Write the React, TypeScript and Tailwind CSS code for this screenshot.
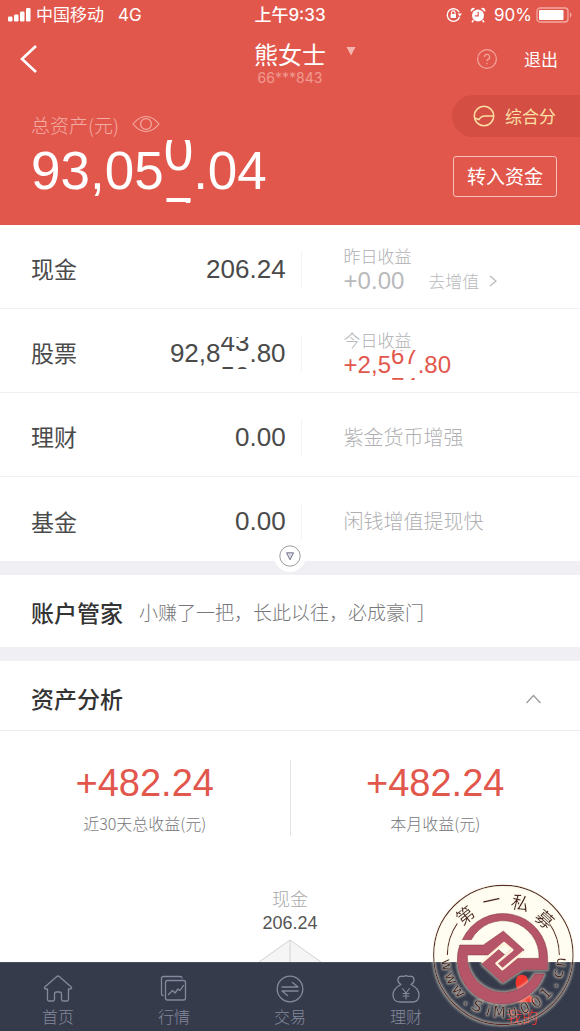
import type { ReactNode } from "react";

const NUM = "font-['Liberation_Sans','Noto_Sans_CJK_SC',sans-serif]";

type Digit = { shown: string; next: string };

type Amount = { head: string; rolling?: Digit[]; tail?: string };

function RollingAmount({
  amount,
  windowClass = "",
  stripClass = "",
}: {
  amount: Amount;
  windowClass?: string;
  stripClass?: string;
}) {
  return (
    <span className={`${NUM} flex items-center`}>
      <span>{amount.head}</span>
      {amount.rolling && (
        <span className={`flex overflow-hidden ${windowClass}`}>
          {amount.rolling.map((d, i) => (
            <span key={i} className={`flex flex-col gap-px ${stripClass}`}>
              <span>{d.shown}</span>
              <span>{d.next}</span>
            </span>
          ))}
        </span>
      )}
      {amount.tail && <span>{amount.tail}</span>}
    </span>
  );
}

function StatusBar() {
  return (
    <div className="grid h-[30px] grid-cols-3 items-center pl-2 pr-2 font-['Inter','Noto_Sans_CJK_SC',sans-serif] text-[17px] leading-none">
      <div className="flex items-center gap-1">
        <svg width="24" height="14" viewBox="0 0 24 14" fill="currentColor" aria-hidden="true">
          <rect x="0" y="8.5" width="4.5" height="5" rx="1.2" />
          <rect x="6" y="6.5" width="4.5" height="7" rx="1.2" />
          <rect x="12" y="3.5" width="4.5" height="10" rx="1.2" />
          <rect x="18" y="0" width="4.5" height="13.5" rx="1.2" />
        </svg>
        <span className="whitespace-nowrap">中国移动</span>
        <span className="ml-[10px]">4G</span>
      </div>
      <div className="whitespace-nowrap text-center font-medium">上午9:33</div>
      <div className="flex items-center justify-end">
        <svg width="16" height="16" viewBox="0 0 16 16" fill="none" aria-hidden="true">
          <path d="M13.2 5.2A6.3 6.3 0 1 0 13.6 9.8" stroke="currentColor" strokeWidth="1.4" />
          <path d="M11.6 6.4h4.4l-2.2 3z" fill="currentColor" />
          <rect x="4.6" y="7" width="5.4" height="4" rx=".6" fill="currentColor" />
          <path d="M5.6 7V5.6a1.7 1.7 0 0 1 3.4 0V7" stroke="currentColor" strokeWidth="1.1" />
        </svg>
        <svg className="ml-2" width="16" height="16" viewBox="0 0 16 16" fill="currentColor" aria-hidden="true">
          <path d="M1 4.8A2.6 2.6 0 0 1 5 1.6zM15 4.8a2.6 2.6 0 0 0-4-3.2z" />
          <path d="M3.4 13.2 2 15.2M12.6 13.2l1.4 2" stroke="currentColor" strokeWidth="1.5" />
          <circle cx="8" cy="8.6" r="6" />
          <path d="M8.2 4.8v4H4.8" fill="none" stroke="#e2574c" strokeWidth="1.2" />
        </svg>
        <span className="ml-2">90%</span>
        <svg className="ml-1 w-9 shrink-0" width="36" height="16" viewBox="0 0 36 16" fill="none" aria-hidden="true">
          <rect x="1" y="1" width="31" height="14" rx="3" stroke="#f3aaa3" strokeWidth="1.3" />
          <rect x="3" y="3" width="24.5" height="10" rx="1" fill="currentColor" />
          <path d="M34 5.5c2 .6 2 4.4 0 5z" fill="#f3aaa3" />
        </svg>
      </div>
    </div>
  );
}

function AccountHeader() {
  return (
    <header className="bg-[#e2574c] pb-[22px] text-white">
      <StatusBar />
      <div className="grid h-[65px] grid-cols-[1fr_auto_1fr] items-start">
        <button type="button" aria-label="返回" className="ml-5 mt-[14px] w-fit">
          <svg width="18" height="30" viewBox="0 0 18 30" fill="none" stroke="currentColor" strokeWidth="2.6">
            <path d="M16 2 2 15l14 13" />
          </svg>
        </button>
        <div className="pt-2 text-center">
          <h1 className="text-2xl leading-8">熊女士</h1>
          <p className="font-['Inter',sans-serif] text-sm leading-4 text-[#f09a92]">66***843</p>
        </div>
        <div className="flex items-start pr-[22px]">
          <button type="button" aria-label="切换账户" className="ml-5 mt-4">
            <svg width="10" height="10" viewBox="0 0 10 10" fill="#f5b5ae">
              <path d="M0.5 1h9L5 9.5z" />
            </svg>
          </button>
          <button type="button" aria-label="帮助" className="ml-auto mt-[18px]">
            <svg width="22" height="22" viewBox="0 0 22 22" fill="none" stroke="#f3a59d" strokeWidth="1.2">
              <circle cx="11" cy="11" r="9.4" />
              <path d="M8.4 9a2.6 2.6 0 1 1 3.7 2.4c-.8.4-1.1.8-1.1 1.7M11 14.8v1.4" />
            </svg>
          </button>
          <a href="#logout" className="ml-[26px] mt-[17px] text-[17px] leading-6">
            退出
          </a>
        </div>
      </div>
      <div className="flex justify-between">
        <div className="pl-[31px]">
          <div className="flex h-11 items-end gap-[13px] text-[19px] font-light leading-7 text-[#f3aca5]">
            <span>总资产(元)</span>
            <button type="button" aria-label="显示金额" className="mb-[6px]">
              <svg width="28" height="18" viewBox="0 0 28 18" fill="none" stroke="currentColor" strokeWidth="1.2">
                <path d="M1 9Q7 1.500 14 1.500T27 9Q21 16.500 14 16.500T1 9z" />
                <circle cx="14" cy="9" r="5.4" />
              </svg>
            </button>
          </div>
          <div className="text-[53px] leading-[64px]">
            <RollingAmount
              amount={{ head: "93,05", rolling: [{ shown: "0", next: "7" }], tail: ".04" }}
              windowClass="h-[63px]"
              stripClass="-mt-5"
            />
          </div>
        </div>
        <div className="flex flex-col items-end">
          <a
            href="#score"
            className="flex h-[42px] items-center gap-[10px] rounded-l-full bg-[#d54e44] pl-[21px] pr-[24px] text-[17px] text-[#fbe0a5]"
          >
            <svg width="22" height="22" viewBox="0 0 22 22" fill="none" stroke="currentColor" strokeWidth="1.5">
              <circle cx="11" cy="11" r="9.7" />
              <path d="M1.5 13 6 14.500Q8 11 12 11h8.500" />
            </svg>
            综合分
          </a>
          <button type="button" className="mr-[23px] mt-[19px] h-[41px] rounded-[3px] border border-[#f6c0ba] px-[13px] text-[19px]">
            转入资金
          </button>
        </div>
      </div>
    </header>
  );
}

function AssetRow({ label, amount, children }: { label: string; amount: Amount; children: ReactNode }) {
  return (
    <li className="grid h-[84px] grid-cols-[52%_1fr] items-center border-b border-[#f0f0f3] pt-1 last:border-b-0">
      <div className="flex h-9 items-center justify-between border-r border-[#f3f3f5] pl-[31px] pr-[15px] text-[#4a4a4a]">
        <span className="text-[23px]">{label}</span>
        <span className="pt-px text-[26px] leading-[33px]">
          <RollingAmount amount={amount} windowClass="h-8" stripClass="-mt-[11px]" />
        </span>
      </div>
      <div className="pl-[42px] font-light text-[#b0b0b3]">{children}</div>
    </li>
  );
}

function AssetList() {
  return (
    <section className="relative bg-white">
      <ul>
        <AssetRow label="现金" amount={{ head: "206.24" }}>
          <div className="text-[17px] leading-6">昨日收益</div>
          <div className="flex h-[26px] items-center text-2xl leading-[30px] text-[#b9b9bc]">
            <RollingAmount amount={{ head: "+0.00" }} />
            <a href="#grow" className="ml-6 flex items-center gap-[10px] text-[17px]">
              去增值
              <svg width="8" height="12" viewBox="0 0 8 12" fill="none" stroke="currentColor" strokeWidth="1.2">
                <path d="m1 1 6 5-6 5" />
              </svg>
            </a>
          </div>
        </AssetRow>
        <AssetRow
          label="股票"
          amount={{
            head: "92,8",
            rolling: [
              { shown: "4", next: "5" },
              { shown: "3", next: "0" },
            ],
            tail: ".80",
          }}
        >
          <div className="text-[17px] leading-6">今日收益</div>
          <div className="flex h-[26px] items-center text-2xl leading-[30px] text-[#e2574c]">
            <RollingAmount
              amount={{
                head: "+2,5",
                rolling: [
                  { shown: "6", next: "7" },
                  { shown: "7", next: "4" },
                ],
                tail: ".80",
              }}
              windowClass="h-[30px]"
              stripClass="-mt-[9px]"
            />
          </div>
        </AssetRow>
        <AssetRow label="理财" amount={{ head: "0.00" }}>
          <span className="text-xl">紫金货币增强</span>
        </AssetRow>
        <AssetRow label="基金" amount={{ head: "0.00" }}>
          <span className="text-xl">闲钱增值提现快</span>
        </AssetRow>
      </ul>
      <button
        type="button"
        aria-label="展开更多"
        className="absolute -bottom-[11px] left-1/2 -translate-x-1/2 rounded-full bg-white p-1"
      >
        <svg width="24" height="24" viewBox="0 0 24 24" fill="none">
          <circle cx="12" cy="12" r="10.2" stroke="#9b9ba3" />
          <path d="M8.500 8.800h7L12 15.800z" fill="#dcdce6" stroke="#74748c" strokeLinejoin="round" />
        </svg>
      </button>
    </section>
  );
}

function Profit({ value, label }: { value: string; label: string }) {
  return (
    <div className="flex flex-1 flex-col items-center border-l border-[#e3e3e6] first:border-l-0">
      <span className={`${NUM} text-[38px] leading-[46px] text-[#e2574c]`}>{value}</span>
      <span className="mt-1 text-base font-light leading-[26px] text-[#77777a]">{label}</span>
    </div>
  );
}

function Analysis() {
  return (
    <section className="bg-white">
      <div className="flex h-[70px] items-center justify-between border-b border-[#ececef] pl-[31px] pr-[38px] pt-[6px]">
        <h2 className="text-[23px] font-medium text-[#333]">资产分析</h2>
        <button type="button" aria-label="收起">
          <svg width="17" height="10" viewBox="0 0 17 10" fill="none" stroke="#9b9ba0" strokeWidth="1.3">
            <path d="m1.500 9 7-7.500 7 7.500" />
          </svg>
        </button>
      </div>
      <div className="flex pt-[29px]">
        <Profit value="+482.24" label="近30天总收益(元)" />
        <Profit value="+482.24" label="本月收益(元)" />
      </div>
      <div className="flex flex-col items-center pt-[49px]">
        <span className="text-[18px] font-light leading-[26px] text-[#a8a8ab]">现金</span>
        <span className={`${NUM} text-[18px] leading-6 text-[#555]`}>206.24</span>
        <svg className="mt-1" width="62" height="23" viewBox="0 0 62 23" stroke="#d2d2d5" fill="#f5f5f6" aria-hidden="true">
          <path d="M0 23 31 1l31 22" />
          <path d="M31 1v22" />
        </svg>
      </div>
    </section>
  );
}

function TabIcon({ children }: { children: ReactNode }) {
  return (
    <svg
      width="30"
      height="30"
      viewBox="0 0 30 30"
      fill="none"
      stroke="currentColor"
      strokeWidth="1.3"
      strokeLinecap="round"
      strokeLinejoin="round"
      aria-hidden="true"
    >
      {children}
    </svg>
  );
}

const tabs: { label: string; icon: ReactNode; active?: boolean }[] = [
  {
    label: "首页",
    icon: (
      <path d="M13.8 2.500 1.800 13c-.8.8-.4 2 .8 2h1.900v10.500q0 1.500 1.500 1.500h4q1.500 0 1.500-1.500V20q0-2 2-2h3q2 0 2 2v5.500q0 1.500 1.500 1.500h4q1.500 0 1.500-1.500V15h1.900c1.200 0 1.600-1.200.8-2l-12-10.500q-1.200-1-2.400 0z" />
    ),
  },
  {
    label: "行情",
    icon: (
      <>
        <rect x="6.5" y="6.5" width="20" height="19.5" rx="2" />
        <path d="M4 21.500q-1.500 0-1.500-2v-15q0-2 2-2H21q2 0 2 1.500M9.500 20.500l4-4 2.500 2.500 3-4 2 1.500 3.500-5" />
      </>
    ),
  },
  {
    label: "交易",
    icon: (
      <>
        <circle cx="15" cy="15" r="12.8" />
        <path d="M7 13h16l-5.500-4.500M23 17H7l5.500 4.500" />
      </>
    ),
  },
  {
    label: "理财",
    icon: (
      <>
        <path d="M10 10.500C6 8.500 6 3 9.500 2.300c2-.3 2 .4 3.500 0 1.500-.8 2.500-.8 4 0 1.500.4 1.500-.3 3.500 0C24 3 24 8.500 20 10.500 25 13 28 17 28 21c0 5-3 7-7 7H9c-4 0-7-2-7-7 0-4 3-8 8-10.500z" />
        <path d="m11.500 14.500 3.500 4.500 3.500-4.500M15 19v6M12 19.500h6M12 22h6" strokeWidth="1.1" />
      </>
    ),
  },
  {
    label: "我的",
    active: true,
    icon: (
      <g fill="currentColor">
        <path d="M15 1.500c7 0 7 11 3 14h-6c-4-3-4-14 3-14z" />
        <path d="M3 27.500c1-5 5-7 12-7s11 2 12 7z" />
      </g>
    ),
  },
];

function TabBar() {
  return (
    <nav className="sticky bottom-0 mt-auto grid h-[69px] grid-cols-5 border-t border-[#4a4f5e] bg-[#353b4b]">
      {tabs.map((t) => (
        <a
          key={t.label}
          href={`#${t.label}`}
          className={`flex flex-col items-center pt-[11px] text-base font-light leading-6 ${
            t.active ? "text-[#f2372f]" : "text-[#84899b]"
          }`}
        >
          <TabIcon>{t.icon}</TabIcon>
          {t.label}
        </a>
      ))}
    </nav>
  );
}

const hanzi = [
  { c: "第", x: 121, y: 121, r: -38 },
  { c: "一", x: 199, y: 77, r: -12 },
  { c: "私", x: 286, y: 84, r: 14 },
  { c: "募", x: 359, y: 133, r: 42 },
];

const siteAngles = [170, 156, 141, 128, 117, 105, 94, 81, 68, 55, 42, 30, 19, 7];

const SEAL_X = 235;
const SEAL_Y = 240;

function Seal() {
  return (
    <svg
      className="pointer-events-none absolute bottom-0 right-0"
      width="155"
      height="156"
      viewBox="0 0 465 468"
      role="img"
      aria-label="第一私募"
    >
      <defs>
        <filter id="halo" x="-20%" y="-20%" width="140%" height="140%">
          <feMorphology in="SourceAlpha" operator="dilate" radius="3" result="wide" />
          <feGaussianBlur in="wide" stdDeviation="3" result="soft" />
          <feFlood floodColor="#fff8e2" floodOpacity=".5" />
          <feComposite in2="soft" operator="in" result="glow" />
          <feMerge>
            <feMergeNode in="glow" />
            <feMergeNode in="SourceGraphic" />
          </feMerge>
        </filter>
        <clipPath id="upper">
          <rect width="465" height="261" />
        </clipPath>
      </defs>
      <circle cx={SEAL_X} cy={SEAL_Y} r="209" fill="#fffdf2" clipPath="url(#upper)" />
      <g filter="url(#halo)">
        <g fill="none" stroke="#5b2c28" strokeWidth="3.5">
          <circle cx={SEAL_X} cy={SEAL_Y} r="209" />
          <path d="M67 240a168 168 0 0 1 30-95M373 145a168 168 0 0 1 30 95" />
        </g>
        <g transform="translate(90 90)" strokeLinejoin="round">
          <g fill="#b65468" stroke="#8b3b4c" strokeWidth="2">
            <path d="M22 104A134 134 0 0 1 278 157V194H203L143 234 80 177 130 133 150 150 120 176 140 196 186 160H252A108 108 0 0 0 49 104z" />
            <path d="M14 120H85L145 78 208 135 142 191 122 174 168 135 148 115 102 150H37A108 108 0 0 0 239 207H268A134 134 0 0 1 14 120z" />
          </g>
          <path d="M80 172 147 114 172 135 124 175 142 193 206 140" fill="none" stroke="#fff3dc" strokeWidth="7" />
        </g>
      </g>
      <g fill="#4e2522" textAnchor="middle" filter="url(#halo)">
        <g className="font-['Noto_Sans_CJK_SC',sans-serif] text-[54px]">
          {hanzi.map((h) => (
            <text key={h.c} transform={`translate(${h.x} ${h.y}) rotate(${h.r})`} dy="20">
              {h.c}
            </text>
          ))}
        </g>
        <g className="font-['DejaVu_Sans',sans-serif] text-[45px]">
          {Array.from("www.SiMu001.cn").map((c, i) => {
            const angle = siteAngles[i];
            const rad = (angle * Math.PI) / 180;
            const x = SEAL_X + 173 * Math.cos(rad);
            const y = SEAL_Y + 173 * Math.sin(rad);
            return (
              <text key={i} transform={`translate(${x} ${y}) rotate(${angle - 90})`} dy="14">
                {c}
              </text>
            );
          })}
        </g>
      </g>
    </svg>
  );
}

export default function App() {
  return (
    <div className="relative flex min-h-screen flex-col bg-[#efeff4] font-['Noto_Sans_CJK_SC',sans-serif]">
      <AccountHeader />
      <main className="flex grow flex-col gap-[14px]">
        <AssetList />
        <section className="flex min-h-[72px] items-center bg-white px-[31px] pt-[3px]">
          <h2 className="text-[23px] font-medium text-[#333]">账户管家</h2>
          <p className="ml-4 text-[19px] font-light text-[#77777a]">小赚了一把，长此以往，必成豪门</p>
        </section>
        <Analysis />
      </main>
      <TabBar />
      <Seal />
    </div>
  );
}
